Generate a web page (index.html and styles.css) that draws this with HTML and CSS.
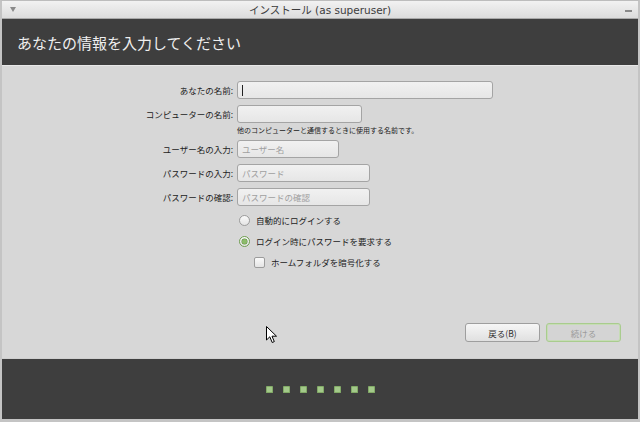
FILE: index.html
```html
<!DOCTYPE html>
<html lang="ja">
<head>
<meta charset="utf-8">
<title>インストール</title>
<link rel="stylesheet" href="styles.css">
</head>
<body>
<div class="window">
  <div class="titlebar">
    <span class="menu-arrow"></span>
    <span class="title">インストール (as superuser)</span>
    <span class="minimize"></span>
  </div>
  <div class="header">あなたの情報を入力してください</div>
  <div class="content">
    <div class="form">
      <label class="label">あなたの名前:</label>
      <div class="field"><div class="input w-name"><span class="caret"></span></div></div>

      <label class="label">コンピューターの名前:</label>
      <div class="field"><div class="input w-comp"></div></div>
      <div></div>
      <div class="hint">他のコンピューターと通信するときに使用する名前です。</div>

      <label class="label">ユーザー名の入力:</label>
      <div class="field"><div class="input w-user"><span class="ph">ユーザー名</span></div></div>

      <label class="label">パスワードの入力:</label>
      <div class="field"><div class="input w-pass"><span class="ph">パスワード</span></div></div>

      <label class="label">パスワードの確認:</label>
      <div class="field"><div class="input w-pass"><span class="ph">パスワードの確認</span></div></div>

      <div></div>
      <div class="options">
        <div class="opt"><span class="radio"></span><span>自動的にログインする</span></div>
        <div class="opt"><span class="radio checked"></span><span>ログイン時にパスワードを要求する</span></div>
        <div class="opt sub"><span class="check"></span><span>ホームフォルダを暗号化する</span></div>
      </div>
    </div>
    <div class="buttons">
      <div class="btn">戻る(B)</div>
      <div class="btn disabled">続ける</div>
    </div>
  </div>
  <div class="footer">
    <span class="dot"></span><span class="dot"></span><span class="dot"></span><span class="dot"></span><span class="dot"></span><span class="dot"></span><span class="dot"></span>
  </div>
  <svg class="cursor" width="12" height="18" viewBox="0 0 12 18">
    <path d="M0.5 0.5 L0.5 14 L3.8 10.8 L6.2 16.5 L8.3 15.6 L6 10.2 L10.5 10.2 Z" fill="#fff" stroke="#000" stroke-width="1"/>
  </svg>
</div>
</body>
</html>
```
FILE: styles.css
```css
* { box-sizing: border-box; }
html, body { margin: 0; padding: 0; }
body {
  width: 640px;
  height: 422px;
  overflow: hidden;
  font-family: "Noto Sans CJK JP", "Noto Sans", sans-serif;
  background: #cfcfcf;
}
.window {
  position: relative;
  width: 640px;
  height: 422px;
  display: flex;
  flex-direction: column;
  border: 2px solid #c4c4c4;
  border-top: 1px solid #bdbdbd;
  border-bottom-width: 3px;
  background: #d7d7d7;
}
.titlebar {
  height: 18px;
  flex: none;
  display: flex;
  align-items: center;
  justify-content: center;
  position: relative;
  background: linear-gradient(#f2f2f2, #dcdcdc);
  border-bottom: 1px solid #a9a9a9;
}
.title {
  font-family: "DejaVu Sans", "Noto Sans CJK JP", sans-serif;
  font-size: 10.5px;
  color: #3c3c3c;
}
.menu-arrow {
  position: absolute;
  left: 8px;
  top: 6px;
  width: 0;
  height: 0;
  border-left: 3.5px solid transparent;
  border-right: 3.5px solid transparent;
  border-top: 5px solid #8a8a8a;
}
.minimize {
  position: absolute;
  right: 6px;
  top: 9px;
  width: 7px;
  height: 2px;
  background: #8a8a8a;
}
.header {
  height: 47px;
  flex: none;
  background: #3e3e3e;
  color: #efefef;
  font-size: 15px;
  padding-left: 15px;
  display: flex;
  align-items: center;
  border-bottom: 1px solid #e8e8e8;
}
.content {
  flex: 1;
  display: flex;
  flex-direction: column;
  padding: 15px 17px 16px 0;
  background: #d7d7d7;
  font-size: 8.5px;
  color: #222;
}
.form {
  display: grid;
  grid-template-columns: 231px auto;
  column-gap: 4px;
  align-items: start;
}
.label {
  text-align: right;
  white-space: nowrap;
  height: 18px;
  line-height: 18px;
}
.field { margin-bottom: 6px; }
.input {
  height: 18px;
  border: 1px solid #a4a4a4;
  border-radius: 3px;
  background: linear-gradient(#f1f1f1, #e6e6e6);
  display: flex;
  align-items: center;
  padding-left: 4px;
  color: #a0a0a0;
}
.w-name { width: 256px; }
.w-comp { width: 125px; }
.w-user { width: 102px; }
.w-pass { width: 133px; }
.caret {
  width: 1px;
  height: 11px;
  background: #222;
}
.ph { font-size: 8.5px; }
.hint {
  font-size: 7px;
  margin-top: -4px;
  margin-bottom: 5px;
  white-space: nowrap;
}
.options {
  display: flex;
  flex-direction: column;
  gap: 9px;
  margin-top: 2px;
}
.opt {
  display: flex;
  align-items: center;
  gap: 6px;
  height: 12px;
  padding-left: 2px;
}
.opt.sub { padding-left: 17px; }
.radio {
  width: 11px;
  height: 11px;
  border-radius: 50%;
  border: 1px solid #9c9c9c;
  background: linear-gradient(#fafafa, #e4e4e4);
  position: relative;
}
.radio.checked {
  border-color: #6f9e50;
}
.radio.checked::after {
  content: "";
  position: absolute;
  left: 2px;
  top: 2px;
  width: 5px;
  height: 5px;
  border-radius: 50%;
  background: #8cbc6a;
  box-shadow: 0 0 0 0.5px #5f8a43;
}
.check {
  width: 11px;
  height: 11px;
  border-radius: 2px;
  border: 1px solid #9c9c9c;
  background: linear-gradient(#fafafa, #e4e4e4);
}
.buttons {
  margin-top: auto;
  display: flex;
  justify-content: flex-end;
  gap: 6px;
}
.btn {
  width: 75px;
  height: 19px;
  border: 1px solid #9e9e9e;
  border-radius: 3px;
  background: linear-gradient(#f6f6f6, #e0e0e0);
  display: flex;
  align-items: center;
  justify-content: center;
  font-size: 8.5px;
  color: #2e2e2e;
}
.btn.disabled {
  border-color: #a9cc8e;
  background: #d4d4d4;
  color: #9a9a9a;
  box-shadow: inset 0 0 0 1px #c6dcb5;
}
.footer {
  height: 61px;
  flex: none;
  background: #3e3e3e;
  display: flex;
  align-items: center;
  justify-content: center;
  gap: 10px;
  border-top: 1px solid #cfcfcf;
}
.dot {
  width: 7px;
  height: 7px;
  border-radius: 1.5px;
  background: #a3c98a;
  box-shadow: inset 0 0 0 1px #82ab66;
}
.cursor {
  position: absolute;
  left: 264px;
  top: 325px;
}
```
